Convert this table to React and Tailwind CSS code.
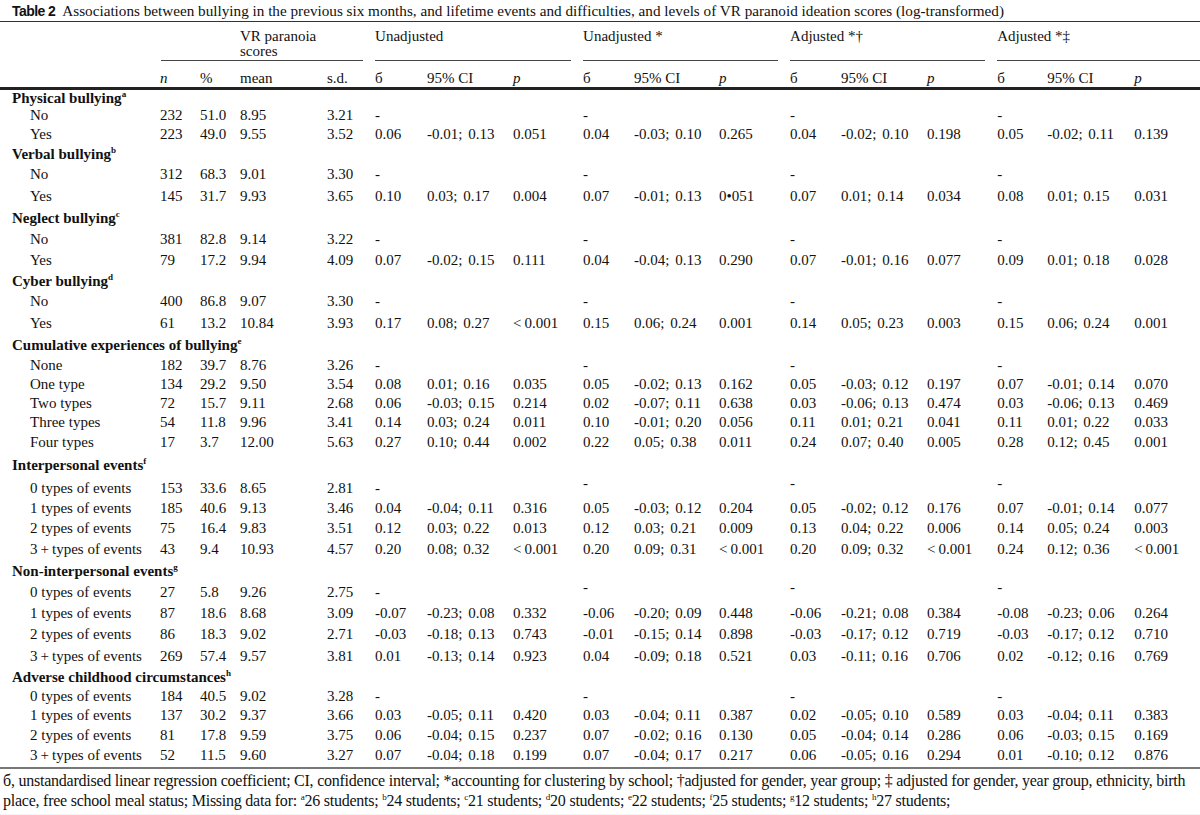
import React from 'react';

const serif = "font-['Liberation_Serif','Times_New_Roman',serif]";

// column widths in px (label, n, %, mean, sd, then 4 x [b, CI, p])
const colWidths = [160, 40, 40, 87, 48, 52, 86, 70, 51, 85, 71, 51, 86, 70, 50, 87, 66];

const D = '-';

const sections = [
  {
    title: 'Physical bullying', sup: 'a', h: 18,
    rows: [
      { label: 'No', h: 19, base: ['232', '51.0', '8.95', '3.21'], ref: true },
      { label: 'Yes', h: 19, base: ['223', '49.0', '9.55', '3.52'], est: [['0.06', '-0.01; 0.13', '0.051'], ['0.04', '-0.03; 0.10', '0.265'], ['0.04', '-0.02; 0.10', '0.198'], ['0.05', '-0.02; 0.11', '0.139']] },
    ],
  },
  {
    title: 'Verbal bullying', sup: 'b', h: 20,
    rows: [
      { label: 'No', h: 21, base: ['312', '68.3', '9.01', '3.30'], ref: true },
      { label: 'Yes', h: 22, base: ['145', '31.7', '9.93', '3.65'], est: [['0.10', '0.03; 0.17', '0.004'], ['0.07', '-0.01; 0.13', '0•051'], ['0.07', '0.01; 0.14', '0.034'], ['0.08', '0.01; 0.15', '0.031']] },
    ],
  },
  {
    title: 'Neglect bullying', sup: 'c', h: 22,
    rows: [
      { label: 'No', h: 21, base: ['381', '82.8', '9.14', '3.22'], ref: true },
      { label: 'Yes', h: 20, base: ['79', '17.2', '9.94', '4.09'], est: [['0.07', '-0.02; 0.15', '0.111'], ['0.04', '-0.04; 0.13', '0.290'], ['0.07', '-0.01; 0.16', '0.077'], ['0.09', '0.01; 0.18', '0.028']] },
    ],
  },
  {
    title: 'Cyber bullying', sup: 'd', h: 21,
    rows: [
      { label: 'No', h: 21, base: ['400', '86.8', '9.07', '3.30'], ref: true },
      { label: 'Yes', h: 22, base: ['61', '13.2', '10.84', '3.93'], est: [['0.17', '0.08; 0.27', '<\u20090.001'], ['0.15', '0.06; 0.24', '0.001'], ['0.14', '0.05; 0.23', '0.003'], ['0.15', '0.06; 0.24', '0.001']] },
    ],
  },
  {
    title: 'Cumulative experiences of bullying', sup: 'e', h: 21,
    rows: [
      { label: 'None', h: 20, base: ['182', '39.7', '8.76', '3.26'], ref: true },
      { label: 'One type', h: 19, base: ['134', '29.2', '9.50', '3.54'], est: [['0.08', '0.01; 0.16', '0.035'], ['0.05', '-0.02; 0.13', '0.162'], ['0.05', '-0.03; 0.12', '0.197'], ['0.07', '-0.01; 0.14', '0.070']] },
      { label: 'Two types', h: 19, base: ['72', '15.7', '9.11', '2.68'], est: [['0.06', '-0.03; 0.15', '0.214'], ['0.02', '-0.07; 0.11', '0.638'], ['0.03', '-0.06; 0.13', '0.474'], ['0.03', '-0.06; 0.13', '0.469']] },
      { label: 'Three types', h: 19, base: ['54', '11.8', '9.96', '3.41'], est: [['0.14', '0.03; 0.24', '0.011'], ['0.10', '-0.01; 0.20', '0.056'], ['0.11', '0.01; 0.21', '0.041'], ['0.11', '0.01; 0.22', '0.033']] },
      { label: 'Four types', h: 21, base: ['17', '3.7', '12.00', '5.63'], est: [['0.27', '0.10; 0.44', '0.002'], ['0.22', '0.05; 0.38', '0.011'], ['0.24', '0.07; 0.40', '0.005'], ['0.28', '0.12; 0.45', '0.001']] },
    ],
  },
  {
    title: 'Interpersonal events', sup: 'f', h: 24,
    rows: [
      { label: '0 types of events', h: 22, base: ['153', '33.6', '8.65', '2.81'], ref: true, raised: true },
      { label: '1 types of events', h: 19, base: ['185', '40.6', '9.13', '3.46'], est: [['0.04', '-0.04; 0.11', '0.316'], ['0.05', '-0.03; 0.12', '0.204'], ['0.05', '-0.02; 0.12', '0.176'], ['0.07', '-0.01; 0.14', '0.077']] },
      { label: '2 types of events', h: 20, base: ['75', '16.4', '9.83', '3.51'], est: [['0.12', '0.03; 0.22', '0.013'], ['0.12', '0.03; 0.21', '0.009'], ['0.13', '0.04; 0.22', '0.006'], ['0.14', '0.05; 0.24', '0.003']] },
      { label: '3\u2009+\u2009types of events', h: 22, base: ['43', '9.4', '10.93', '4.57'], est: [['0.20', '0.08; 0.32', '<\u20090.001'], ['0.20', '0.09; 0.31', '<\u20090.001'], ['0.20', '0.09; 0.32', '<\u20090.001'], ['0.24', '0.12; 0.36', '<\u20090.001']] },
    ],
  },
  {
    title: 'Non-interpersonal events', sup: 'g', h: 22,
    rows: [
      { label: '0 types of events', h: 21, base: ['27', '5.8', '9.26', '2.75'], ref: true, raised: true },
      { label: '1 types of events', h: 20, base: ['87', '18.6', '8.68', '3.09'], est: [['-0.07', '-0.23; 0.08', '0.332'], ['-0.06', '-0.20; 0.09', '0.448'], ['-0.06', '-0.21; 0.08', '0.384'], ['-0.08', '-0.23; 0.06', '0.264']] },
      { label: '2 types of events', h: 22, base: ['86', '18.3', '9.02', '2.71'], est: [['-0.03', '-0.18; 0.13', '0.743'], ['-0.01', '-0.15; 0.14', '0.898'], ['-0.03', '-0.17; 0.12', '0.719'], ['-0.03', '-0.17; 0.12', '0.710']] },
      { label: '3\u2009+\u2009types of events', h: 22, base: ['269', '57.4', '9.57', '3.81'], est: [['0.01', '-0.13; 0.14', '0.923'], ['0.04', '-0.09; 0.18', '0.521'], ['0.03', '-0.11; 0.16', '0.706'], ['0.02', '-0.12; 0.16', '0.769']] },
    ],
  },
  {
    title: 'Adverse childhood circumstances', sup: 'h', h: 20,
    rows: [
      { label: '0 types of events', h: 19, base: ['184', '40.5', '9.02', '3.28'], ref: true },
      { label: '1 types of events', h: 19, base: ['137', '30.2', '9.37', '3.66'], est: [['0.03', '-0.05; 0.11', '0.420'], ['0.03', '-0.04; 0.11', '0.387'], ['0.02', '-0.05; 0.10', '0.589'], ['0.03', '-0.04; 0.11', '0.383']] },
      { label: '2 types of events', h: 20, base: ['81', '17.8', '9.59', '3.75'], est: [['0.06', '-0.04; 0.15', '0.237'], ['0.07', '-0.02; 0.16', '0.130'], ['0.05', '-0.04; 0.14', '0.286'], ['0.06', '-0.03; 0.15', '0.169']] },
      { label: '3\u2009+\u2009types of events', h: 21, base: ['52', '11.5', '9.60', '3.27'], est: [['0.07', '-0.04; 0.18', '0.199'], ['0.07', '-0.04; 0.17', '0.217'], ['0.06', '-0.05; 0.16', '0.294'], ['0.01', '-0.10; 0.12', '0.876']] },
    ],
  },
];

const groups = ['Unadjusted', 'Unadjusted *', 'Adjusted *\u2020', 'Adjusted *\u2021'];

const DataRow = ({ row }) => (
  <tr style={{ height: row.h }}>
    <td className="pl-[30px] whitespace-nowrap">{row.label}</td>
    {row.base.map((v, i) => (
      <td key={i}>{v}</td>
    ))}
    {row.ref
      ? [0, 1, 2, 3].map((g) => [
          <td key={g + 'b'}>
            <span className={g > 0 && row.raised ? 'relative -top-[5px]' : ''}>{D}</span>
          </td>,
          <td key={g + 'c'} />,
          <td key={g + 'p'} />,
        ])
      : row.est.map((e, g) =>
          e.map((v, i) => (
            <td key={g + '-' + i} className={`whitespace-nowrap ${i === 1 ? '[word-spacing:2px]' : ''}`}>
              {v}
            </td>
          ))
        )}
  </tr>
);

const sup = 'text-[9px] align-[6px] leading-none';

const App = () => {
  return (
    <div className={`w-[1200px] h-[815px] flex flex-col bg-white text-[#111] ${serif} text-[15px] leading-none`}>
      {/* Title */}
      <div className="h-[22px] shrink-0 flex items-center pl-[12px] pt-[1px] border-b border-[#333] whitespace-nowrap">
        <span className="font-['Liberation_Sans_Narrow','Liberation_Sans',Arial,sans-serif] font-bold text-[14px] tracking-[-0.04em] mr-[7px]">
          Table 2
        </span>
        <span className="text-[15.2px]">
          Associations between bullying in the previous six months, and lifetime events and difficulties, and levels of VR paranoid ideation scores (log-transformed)
        </span>
      </div>

      <table className="table-fixed border-collapse w-[1200px] text-left shrink-0">
        <colgroup>
          {colWidths.map((w, i) => (
            <col key={i} style={{ width: w }} />
          ))}
        </colgroup>
        <thead>
          <tr className="h-[39px]">
            <th className="font-normal" />
            <th colSpan={4} className="font-normal align-top p-0 pt-[7px]">
              <div className="ml-[1px] mr-[12px] h-[32px] border-b border-[#444] pl-[79px] leading-[15px] text-left">
                VR paranoia<br />scores
              </div>
            </th>
            {groups.map((g, i) => (
              <th key={i} colSpan={3} className="font-normal align-top p-0 pt-[7px]">
                <div className={`h-[32px] border-b border-[#444] leading-[15px] ${i === 3 ? 'mr-0' : 'mr-[12px]'}`}>
                  {g}
                </div>
              </th>
            ))}
          </tr>
          <tr className="h-[27px] border-b-[3px] border-[#222]">
            <th />
            <th className="font-normal italic align-bottom pb-[1px]">n</th>
            <th className="font-normal align-bottom pb-[1px]">%</th>
            <th className="font-normal align-bottom pb-[1px]">mean</th>
            <th className="font-normal align-bottom pb-[1px]">s.d.</th>
            {groups.map((g, i) => [
              <th key={i + 'b'} className="font-normal align-bottom pb-[1px]">б</th>,
              <th key={i + 'c'} className="font-normal align-bottom pb-[1px]">95% CI</th>,
              <th key={i + 'p'} className="font-normal italic align-bottom pb-[1px]">p</th>,
            ])}
          </tr>
        </thead>
        {sections.map((s, si) => (
          <tbody key={si}>
            <tr style={{ height: s.h }}>
              <td colSpan={5} className="pl-[12px] font-bold whitespace-nowrap">
                {s.title}
                <span className={`${sup} font-bold`}>{s.sup}</span>
              </td>
              <td colSpan={12} />
            </tr>
            {s.rows.map((r, ri) => (
              <DataRow key={ri} row={r} />
            ))}
          </tbody>
        ))}
      </table>

      {/* Footnote */}
      <div className="shrink-0 border-t-2 border-[#777] mt-[1px] pt-[2px] pl-[3px] pb-[3px] text-[16px] leading-[20px] tracking-[-0.015em] whitespace-nowrap">
        б, unstandardised linear regression coefficient; CI, confidence interval; *accounting for clustering by school; †adjusted for gender, year group; ‡ adjusted for gender, year group, ethnicity, birth
        <br />
        place, free school meal status; Missing data for: <span className={sup}>a</span>26 students; <span className={sup}>b</span>24 students; <span className={sup}>c</span>21 students; <span className={sup}>d</span>20 students; <span className={sup}>e</span>22 students; <span className={sup}>f</span>25 students; <span className={sup}>g</span>12 students; <span className={sup}>h</span>27 students;
      </div>
      <div className="flex-1 bg-[#f4f4f4]" />
    </div>
  );
};

export default App;
